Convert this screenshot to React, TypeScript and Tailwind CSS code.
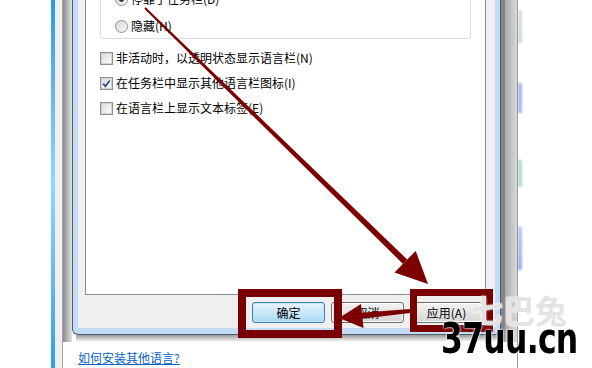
import React from "react";

const cjk = "font-['Noto_Sans_CJK_SC','Noto_Sans',sans-serif]";

function CheckBox({ checked = false }: { checked?: boolean }) {
  return (
    <span className="flex h-[13px] w-[13px] shrink-0 items-center justify-center border border-[#8e8f8f] bg-white">
      <span className="relative flex h-[11px] w-[11px] items-center justify-center border border-[#d2d2d2] bg-linear-to-br from-[#dedede] to-[#fbfbfb]">
        {checked && (
          <svg width="11" height="11" viewBox="0 0 11 11" className="absolute -left-px -top-px">
            <path d="M2.2 5.6 L4.4 8.3 L8.8 2.4" fill="none" stroke="#2c4b8e" strokeWidth="1.7" />
          </svg>
        )}
      </span>
    </span>
  );
}

function Radio({ checked = false }: { checked?: boolean }) {
  return (
    <span className="flex h-[13px] w-[13px] shrink-0 items-center justify-center rounded-full border border-[#8e8f8f] bg-linear-to-br from-[#d6d6d6] to-[#fafafa]">
      {checked && <span className="h-[5px] w-[5px] rounded-full bg-[#2a3c4c]" />}
    </span>
  );
}

function Row({ children }: { children: React.ReactNode }) {
  return <div className="flex h-[16px] items-center gap-[3px]">{children}</div>;
}

function Btn({ label, focused = false }: { label: string; focused?: boolean }) {
  return (
    <div
      className={
        focused
          ? "flex h-[21px] w-[73px] items-center justify-center rounded-[3px] border border-[#3c7fb1] bg-linear-to-b from-[#e8f5fc] to-[#a9d9f4] shadow-[inset_0_0_0_1px_#c6e8f8] text-[12px] text-black"
          : "flex h-[21px] w-[73px] items-center justify-center rounded-[3px] border border-[#707070] bg-linear-to-b from-[#f3f3f3] to-[#d6d6d6] shadow-[inset_0_0_0_1px_#fbfbfb] text-[12px] text-black"
      }
    >
      {label}
    </div>
  );
}

function Dialog() {
  return (
    <div className="flex w-[429px] shrink-0 flex-col">
      <div className="flex h-[335px] flex-col rounded-b-[6px] border-x border-b border-[#4e5d6c] bg-[#c4dcf3] px-[5px] pb-[6px]">
        <div className="flex flex-1 flex-col bg-[#f0f0f0] pl-[7px] pr-[9px]">
          {/* tab panel */}
          <div className="flex h-[295px] flex-col overflow-hidden border-x border-b border-[#898c95] bg-white">
            <div className="mx-[14px] -mt-[24px] flex h-[63px] shrink-0 flex-col gap-[11px] rounded-[3px] border border-[#d5dfe5] pl-[14px] pt-[14px]">
              <Row>
                <Radio checked />
                <span>停靠于任务栏(D)</span>
              </Row>
              <Row>
                <Radio />
                <span>隐藏(H)</span>
              </Row>
            </div>
            <div className="mt-[11px] flex flex-col gap-[9px] pl-[14px]">
              <Row>
                <CheckBox />
                <span>非活动时，以透明状态显示语言栏(N)</span>
              </Row>
              <Row>
                <CheckBox checked />
                <span>在任务栏中显示其他语言栏图标(I)</span>
              </Row>
              <Row>
                <CheckBox />
                <span>在语言栏上显示文本标签(E)</span>
              </Row>
            </div>
          </div>
          {/* buttons */}
          <div className="flex justify-end gap-[6px] pr-[3px] pt-[7px]">
            <Btn label="确定" focused />
            <Btn label="取消" />
            <Btn label="应用(A)" />
          </div>
        </div>
      </div>
      <div className="mx-[4px] h-[7px] bg-linear-to-b from-[#9a9a9a] to-white" />
    </div>
  );
}

export default function App() {
  return (
    <div className={`relative flex h-[368px] w-[592px] overflow-hidden bg-white text-[12px] leading-[16px] text-black ${cjk}`}>
      <div className="w-[51px] shrink-0" />

      {/* background window */}
      <div className="flex shrink-0">
        <div className="w-[4px] bg-linear-to-b from-[#2e98e2] via-[#8fd8fa] to-[#2e9de6]" />
        <div className="w-[7px] bg-[#efefef]" />
        <div className="w-px bg-[#a3a3a3]" />
        <div className="flex w-[454px] flex-col bg-white">
          <div className="flex h-[342px]">
            <div className="w-[9px] shrink-0 bg-linear-to-r from-[#8a8a8a] to-[#e4e4e4]" />
            <Dialog />
            <div className="flex w-[16px] shrink-0">
              <div className="w-[4px] bg-[#858585]" />
              <div className="flex-1 bg-linear-to-r from-[#a9a9a9] to-[#dadada]" />
            </div>
          </div>
          <div className="mt-[8px] pl-[15px]">
            <span className="text-[#0a62c4] underline">如何安装其他语言?</span>
          </div>
        </div>
        <div className="w-px bg-[#9a9a9a]" />
      </div>

      {/* glass edge blurs */}
      <div className="flex w-[4px] shrink-0 flex-col opacity-60 blur-[1px]">
        <div className="mt-[10px] h-[33px] bg-linear-to-b from-[#c8c8c8] to-[#9cc9aa]" />
        <div className="mt-[40px] h-[30px] bg-[#6b88d8]" />
        <div className="mt-[47px] h-[27px] bg-[#7cc8a2]" />
        <div className="mt-[40px] h-[43px] bg-linear-to-b from-[#8aa2e0] to-[#5a78cc]" />
      </div>
      <div className="flex-1" />

      {/* annotations */}
      <div className="absolute left-[238px] top-[289px] h-[49px] w-[104px] border-[8px] border-[#780000]" />
      <div className="absolute left-[410px] top-[289px] h-[43px] w-[83px] border-[7px] border-[#780000]" />

      <svg className="pointer-events-none absolute left-0 top-0" width="592" height="368" viewBox="0 0 592 368">
        <polygon points="144.3,8.7 145.7,7.3 407.2,259.5 403,263.9" fill="#7c0000" />
        <polygon points="428,284 394.5,272.5 415.7,250.9" fill="#7c0000" />
        <polygon points="410,309 410,313 362.1,318.8 361.7,312.8" fill="#7c0000" />
        <polygon points="339,318 361,304 363.5,328" fill="#7c0000" />
      </svg>

      {/* watermark */}
      <div className="pointer-events-none absolute left-[471px] top-[291px] text-[32px] font-bold leading-[36px] text-[#dcdcdc]/80 [text-shadow:0_0_2px_#fff,0_0_2px_#fff]">
        七巴兔
      </div>
      <div className="pointer-events-none absolute left-[441px] top-[318px] origin-left scale-x-[0.75] font-['DejaVu_Sans',sans-serif] text-[42px] font-bold leading-[42px] tracking-[-1px] text-black [text-shadow:0_0_2px_#fff,0_0_3px_#fff]">
        37uu.cn
      </div>
    </div>
  );
}
